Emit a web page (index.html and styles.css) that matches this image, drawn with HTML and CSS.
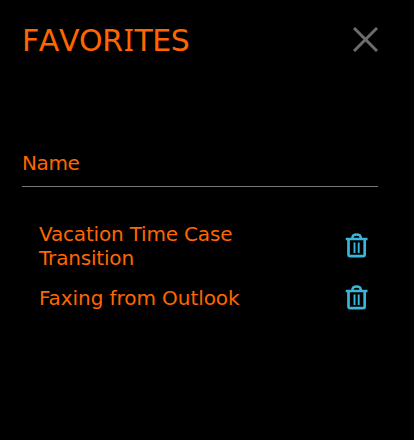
FILE: index.html
```html
<!DOCTYPE html>
<html lang="en">
<head>
<meta charset="utf-8">
<title>Favorites</title>
<link rel="stylesheet" href="styles.css">
</head>
<body>
<main class="panel">
  <header class="panel-header">
    <h1 class="title">FAVOR<span class="serif-i">I</span>TES</h1>
    <button class="icon-button close" aria-label="Close">
      <svg width="25" height="25" viewBox="0 0 25 25"><path d="M1 1L24 24M24 1L1 24" fill="none" stroke="#6c6c6c" stroke-width="3"/></svg>
    </button>
  </header>
  <div class="column-head">Name</div>
  <ul class="list">
    <li class="row">
      <span class="label first">Vacation Time Case Transition</span>
      <button class="icon-button" aria-label="Delete">
        <svg width="24" height="26" viewBox="0 0 24 26"><g fill="none" stroke="#3ab5dc"><path stroke-width="2.7" d="M.8 7H22.500M3.500 7V22.500Q3.500 24.200 5.200 24.200H18Q19.700 24.200 19.700 22.500V7"/><path stroke-width="2.600" d="M7.500 6.500V5.500Q7.500 2.500 11.600 2.500T15.700 5.500V6.500"/><path stroke-width="1.900" d="M9.500 10.500V21M13.700 10.500V21"/></g></svg>
      </button>
    </li>
    <li class="row">
      <span class="label">Faxing from Outlook</span>
      <button class="icon-button" aria-label="Delete">
        <svg width="24" height="26" viewBox="0 0 24 26"><g fill="none" stroke="#3ab5dc"><path stroke-width="2.7" d="M.8 7H22.500M3.500 7V22.500Q3.500 24.200 5.200 24.200H18Q19.700 24.200 19.700 22.500V7"/><path stroke-width="2.600" d="M7.500 6.500V5.500Q7.500 2.500 11.600 2.500T15.700 5.500V6.500"/><path stroke-width="1.900" d="M9.500 10.500V21M13.700 10.500V21"/></g></svg>
      </button>
    </li>
  </ul>
</main>
</body>
</html>
```
FILE: styles.css
```css
body {
  margin: 0;
  background: #000;
  color: #ff6600;
  font: 20px/24px Verdana, "DejaVu Sans", sans-serif;
}
.panel {
  box-sizing: border-box;
  height: 440px;
  padding: 22px 36px 0 22px;
}
.panel-header {
  display: flex;
  justify-content: space-between;
  align-items: center;
  height: 36px;
}
.title {
  margin: 2px 0 0;
  font-size: 30px;
  line-height: 36px;
  font-weight: 400;
  font-kerning: none;
  letter-spacing: -0.42px;
}
.serif-i {
  padding: 0 1px;
  font-family: "Noto Sans", sans-serif;
  line-height: 1;
}
.icon-button {
  display: flex;
  flex: none;
  padding: 0;
  border: 0;
  background: none;
}
.close {
  margin-top: -1px;
}
.column-head {
  margin-top: 93px;
  padding-bottom: 11px;
  border-bottom: 1px solid #777;
  letter-spacing: -0.4px;
}
.list {
  margin: 35px 0 0;
  padding: 0 9px 0 17px;
  list-style: none;
}
.row {
  display: flex;
  justify-content: space-between;
  align-items: center;
  margin-bottom: 16px;
}
.row .icon-button {
  margin: -2px 0 0;
}
.row + .row {
  height: 24px;
}
.label {
  width: 215px;
  letter-spacing: -0.07px;
}
.label.first {
  letter-spacing: -0.18px;
}
```
